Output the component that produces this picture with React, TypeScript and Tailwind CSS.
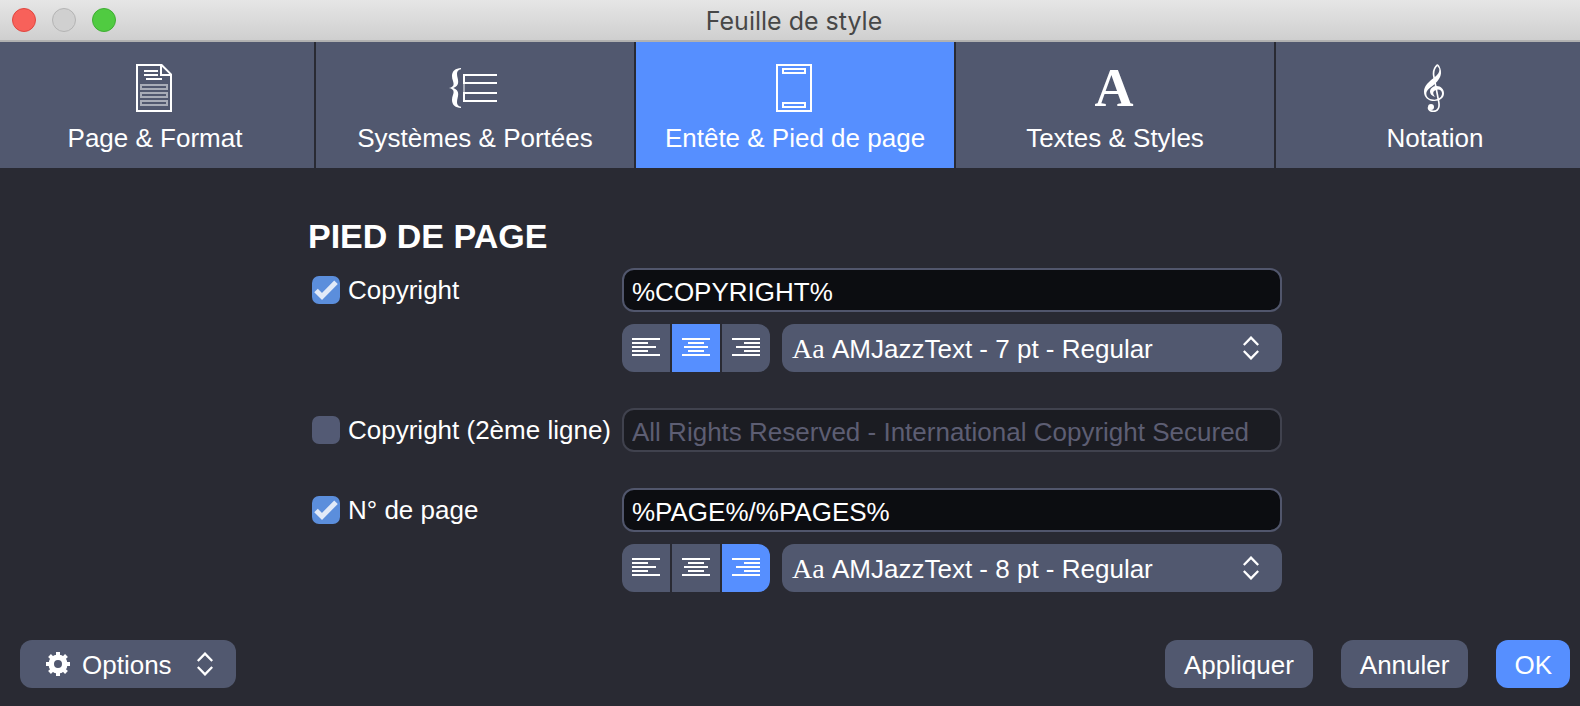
import { useState } from "react";
import type { ReactNode } from "react";

type Align = "left" | "center" | "right";

const ALIGN_LINES: Record<Align, [number, number][]> = {
  left: [[0, 28], [0, 16], [0, 24], [0, 16], [0, 28]],
  center: [[0, 28], [6, 16], [2, 24], [6, 16], [0, 28]],
  right: [[0, 28], [12, 16], [4, 24], [12, 16], [0, 28]],
};

const ALIGN_NAMES: Record<Align, string> = {
  left: "Aligner à gauche",
  center: "Centrer",
  right: "Aligner à droite",
};

function AlignIcon({ align }: { align: Align }) {
  return (
    <svg width="28" height="20" viewBox="0 0 28 20" fill="currentColor" aria-hidden="true">
      {ALIGN_LINES[align].map(([x, w], i) => (
        <rect key={i} x={x} y={i * 4} width={w} height="2" />
      ))}
    </svg>
  );
}

function UpDownIcon() {
  return (
    <svg width="16" height="24" viewBox="0 0 16 24" fill="none" stroke="currentColor" strokeWidth="2.3" aria-hidden="true">
      <path d="M0.8 9 8 1.600l7.200 7.400M0.8 15 8 22.400l7.200-7.400" />
    </svg>
  );
}

function PageIcon() {
  return (
    <svg width="36" height="48" viewBox="0 0 36 48" fill="none" stroke="currentColor" strokeWidth="2" aria-hidden="true">
      <path d="M25.600 1H1v46h34V10.400zM25 1v10h10" />
      <path d="M8 7h14M8 11h14M10 15h16" />
      <g opacity="0.5">
        <rect x="5" y="21" width="26" height="4" />
        <rect x="5" y="29" width="26" height="4" />
        <rect x="5" y="37" width="26" height="4" />
      </g>
    </svg>
  );
}

function StavesIcon() {
  return (
    <svg width="50" height="48" viewBox="0 0 50 48" fill="none" stroke="currentColor" strokeWidth="2" aria-hidden="true">
      <path
        stroke="none"
        fill="currentColor"
        d="M12 4C6.500 4.200 3 7 3 12c0 3.600 1.600 5.400 1.600 8 0 2-1.600 3.400-4.600 4 3 .6 4.600 2 4.600 4 0 2.600-1.600 4.400-1.600 8 0 5 3.500 7.800 9 8v-1.200c-2.600-.6-4-2-4-4.600 0-3 1.200-5.200 1.200-8.200 0-3-1.800-5-5-6 3.200-1 5-3 5-6 0-3-1.200-5.200-1.200-8.200 0-2.600 1.400-4 4-4.600z"
      />
      <path d="M48 11H15v8h33M48 29H15v8h33" />
      <path d="M15 20v8" opacity="0.5" />
    </svg>
  );
}

function HeaderFooterIcon() {
  return (
    <svg width="36" height="48" viewBox="0 0 36 48" fill="none" stroke="currentColor" strokeWidth="2" aria-hidden="true">
      <rect x="1" y="1" width="34" height="46" />
      <rect x="7" y="5" width="22" height="4" />
      <rect x="7" y="39" width="22" height="4" />
    </svg>
  );
}

function ClefIcon() {
  return (
    <svg width="20" height="48" viewBox="0 0 60 144" fill="currentColor" aria-hidden="true">
      <path d="M41 0C48 6 52 18 51 28 49 44 39 55 28 64 15 74 7 80 7 90c1 12 11 17 25 17 14-1 22-9 22-19 0-8-7-12-14-11-10 1-13 7-12 12 1 5 4 7 7 10-10-2-17-8-17-17 1-10 10-16 20-16 13 0 22 10 22 22 0 14-12 23-29 23C12 111 0 99 0 83 0 68 12 56 24 46c12-10 22-17 22-29 0-4-2-7-5-8z" />
      <path d="M41 2C33 9 27 19 29 34l15 78c4 19-2 30-16 30-8 0-14-5-15-12" fill="none" stroke="currentColor" strokeWidth="5" />
      <circle cx="21" cy="129" r="9" />
    </svg>
  );
}

function GearIcon() {
  return (
    <svg width="24" height="24" viewBox="0 0 24 24" fill="currentColor" aria-hidden="true">
      <circle cx="12" cy="12" r="6.800" fill="none" stroke="currentColor" strokeWidth="5.600" />
      {[0, 45, 90, 135, 180, 225, 270, 315].map((a) => (
        <path key={a} d="M10 0h4v4.500h-4z" transform={`rotate(${a} 12 12)`} />
      ))}
    </svg>
  );
}

const TABS: { label: string; icon: ReactNode }[] = [
  { label: "Page & Format", icon: <PageIcon /> },
  { label: "Systèmes & Portées", icon: <StavesIcon /> },
  { label: "Entête & Pied de page", icon: <HeaderFooterIcon /> },
  {
    label: "Textes & Styles",
    icon: (
      <span aria-hidden="true" className="font-['Liberation_Serif',serif] text-[54px] leading-[48px] font-bold">
        A
      </span>
    ),
  },
  { label: "Notation", icon: <ClefIcon /> },
];

function CheckLabel({
  id,
  checked,
  onChange,
  children,
}: {
  id: string;
  checked: boolean;
  onChange: (value: boolean) => void;
  children: ReactNode;
}) {
  return (
    <div className="flex h-11 w-[314px] shrink-0 items-center gap-2 pl-1">
      <span className="grid size-7 shrink-0 place-items-center">
        <input
          id={id}
          type="checkbox"
          checked={checked}
          onChange={(e) => onChange(e.target.checked)}
          className="peer col-start-1 row-start-1 size-7 appearance-none rounded-[7px] bg-[#535a74] checked:bg-[#5b8edc]"
        />
        <svg
          viewBox="0 0 28 28"
          className="pointer-events-none col-start-1 row-start-1 size-7 fill-none stroke-[#e2eaf8] stroke-5 opacity-0 peer-checked:opacity-100"
          aria-hidden="true"
        >
          <path d="M4 14.400 10 20.400 24 6.200" />
        </svg>
      </span>
      <label htmlFor={id} className="whitespace-nowrap">
        {children}
      </label>
    </div>
  );
}

function TextField({
  label,
  value,
  onChange,
  disabled = false,
}: {
  label: string;
  value: string;
  onChange: (value: string) => void;
  disabled?: boolean;
}) {
  return (
    <input
      type="text"
      aria-label={label}
      value={value}
      disabled={disabled}
      onChange={(e) => onChange(e.target.value)}
      className="h-11 w-full rounded-xl border-2 border-[#51566c] bg-[#0c0d11] px-2 pt-1 text-white outline-none disabled:border-[#40424e] disabled:bg-[#1b1c22] disabled:text-[#5d5e73]"
    />
  );
}

function StyleRow({ name, initialAlign, font }: { name: string; initialAlign: Align; font: string }) {
  const [align, setAlign] = useState<Align>(initialAlign);
  return (
    <div className="flex gap-3">
      <div role="group" aria-label={`Alignement ${name}`} className="flex gap-0.5 overflow-hidden rounded-xl">
        {(["left", "center", "right"] as Align[]).map((a) => (
          <button
            key={a}
            type="button"
            aria-label={ALIGN_NAMES[a]}
            aria-pressed={align === a}
            onClick={() => setAlign(a)}
            className="flex size-12 items-center justify-center bg-[#51586f] aria-pressed:bg-[#568fff]"
          >
            <AlignIcon align={a} />
          </button>
        ))}
      </div>
      <div className="grid flex-1 items-center">
        <select
          aria-label={`Police ${name}`}
          className="col-start-1 row-start-1 h-12 w-full appearance-none rounded-xl bg-[#51586f] pt-0.5 pr-12 pl-[50px] text-white outline-none"
        >
          <option>{font}</option>
        </select>
        <span
          aria-hidden="true"
          className="pointer-events-none col-start-1 row-start-1 justify-self-start pt-0.5 pl-2.5 font-['Liberation_Serif',serif] text-[28px] leading-8"
        >
          Aa
        </span>
        <span className="pointer-events-none col-start-1 row-start-1 justify-self-end pr-[23px]">
          <UpDownIcon />
        </span>
      </div>
    </div>
  );
}

export default function App() {
  const [tab, setTab] = useState(2);
  const [copyright, setCopyright] = useState(true);
  const [copyright2, setCopyright2] = useState(false);
  const [pageNo, setPageNo] = useState(true);
  const [copyrightText, setCopyrightText] = useState("%COPYRIGHT%");
  const [copyright2Text, setCopyright2Text] = useState("All Rights Reserved - International Copyright Secured");
  const [pageText, setPageText] = useState("%PAGE%/%PAGES%");

  return (
    <div className="flex min-h-screen flex-col overflow-hidden bg-[#292a33] font-['Liberation_Sans',Arial,sans-serif] text-[26px] leading-8 text-white">
      <header className="grid h-[42px] grid-cols-[1fr_auto_1fr] items-center border-b-2 border-[#b1b1b1] bg-linear-to-b from-[#e6e6e6] to-[#cfcfcf] pl-2">
        <div className="flex gap-4 pl-1">
          <button type="button" aria-label="Fermer" className="size-6 rounded-full border border-[#e0463f] bg-[#f8615a]" />
          <button type="button" aria-label="Réduire" disabled className="size-6 rounded-full border border-[#b4b4b4] bg-[#d0d0d0]" />
          <button type="button" aria-label="Agrandir" className="size-6 rounded-full border border-[#3fae33] bg-[#50cb41]" />
        </div>
        <h1 className="pt-0.5 font-[Inter,sans-serif] text-[25px] text-[#474747]">Feuille de style</h1>
      </header>

      <nav role="tablist" aria-label="Sections" className="-mr-3.5 -ml-1 grid grid-cols-5 gap-0.5">
        {TABS.map((t, i) => (
          <button
            key={t.label}
            type="button"
            role="tab"
            aria-selected={tab === i}
            onClick={() => setTab(i)}
            className="flex flex-col items-center gap-2.5 bg-[#51586f] pt-[22px] pb-3.5 aria-selected:bg-[#568fff]"
          >
            <span className="flex h-12 items-center pr-0.5">{t.icon}</span>
            <span className="whitespace-nowrap">{t.label}</span>
          </button>
        ))}
      </nav>

      <main className="flex flex-1 justify-center pt-12 pl-2.5">
        <div className="w-full max-w-[974px]">
          <h2 className="mb-3 text-[34px] leading-10 font-bold">PIED DE PAGE</h2>
          <div className="flex flex-col gap-9">
            <div className="flex">
              <CheckLabel id="copyright" checked={copyright} onChange={setCopyright}>
                Copyright
              </CheckLabel>
              <div className="flex flex-1 flex-col gap-3">
                <TextField label="Texte du copyright" value={copyrightText} onChange={setCopyrightText} disabled={!copyright} />
                <StyleRow name="du copyright" initialAlign="center" font="AMJazzText - 7 pt - Regular" />
              </div>
            </div>
            <div className="flex">
              <CheckLabel id="copyright2" checked={copyright2} onChange={setCopyright2}>
                Copyright (2ème ligne)
              </CheckLabel>
              <div className="flex-1">
                <TextField
                  label="Texte du copyright, 2ème ligne"
                  value={copyright2Text}
                  onChange={setCopyright2Text}
                  disabled={!copyright2}
                />
              </div>
            </div>
            <div className="flex">
              <CheckLabel id="page-number" checked={pageNo} onChange={setPageNo}>
                N° de page
              </CheckLabel>
              <div className="flex flex-1 flex-col gap-3">
                <TextField label="Texte du n° de page" value={pageText} onChange={setPageText} disabled={!pageNo} />
                <StyleRow name="du n° de page" initialAlign="right" font="AMJazzText - 8 pt - Regular" />
              </div>
            </div>
          </div>
        </div>
      </main>

      <footer className="flex items-center gap-7 pt-6 pr-2.5 pb-[18px] pl-5">
        <button
          type="button"
          aria-haspopup="menu"
          className="mr-auto flex h-12 items-center gap-3 rounded-xl bg-[#51586f] pr-[23px] pl-[26px]"
        >
          <GearIcon />
          <span className="pt-0.5 pr-[13px]">Options</span>
          <UpDownIcon />
        </button>
        <button type="button" className="h-12 rounded-xl bg-[#51586f] px-[19px] pt-0.5">
          Appliquer
        </button>
        <button type="button" className="h-12 rounded-xl bg-[#51586f] px-[19px] pt-0.5">
          Annuler
        </button>
        <button type="button" className="h-12 rounded-xl bg-[#568fff] px-[18px] pt-0.5">
          OK
        </button>
      </footer>
    </div>
  );
}
